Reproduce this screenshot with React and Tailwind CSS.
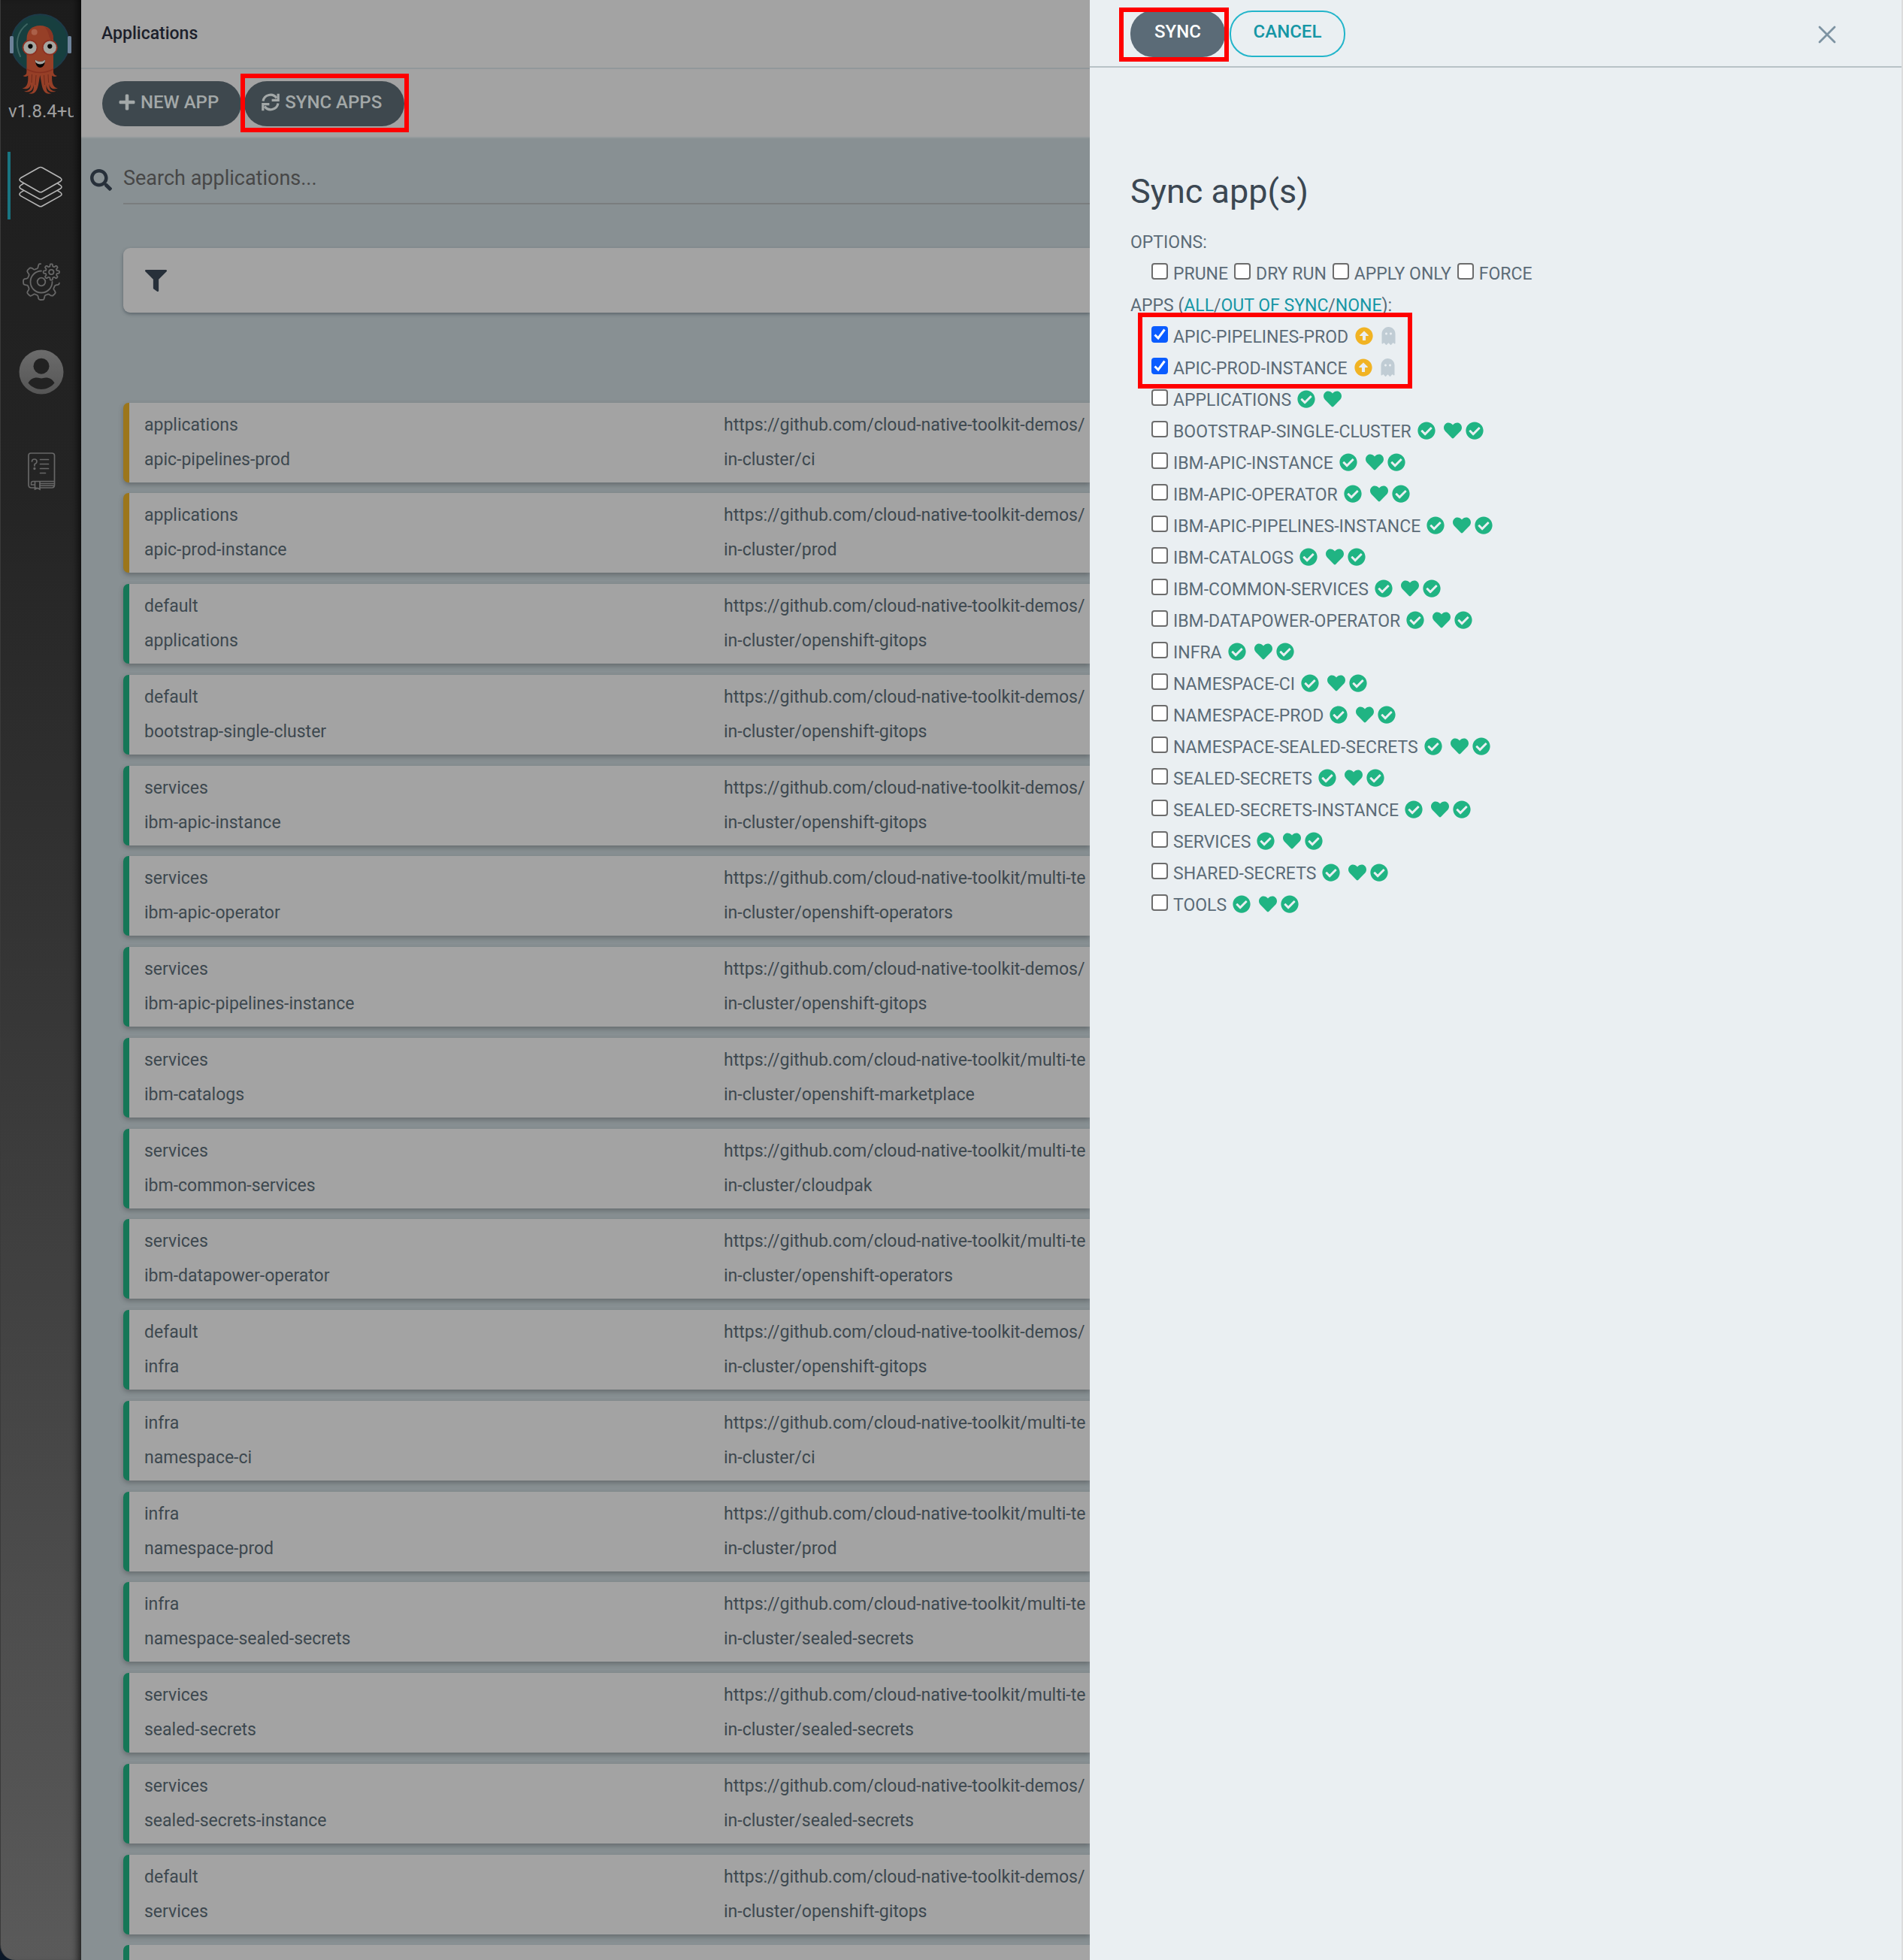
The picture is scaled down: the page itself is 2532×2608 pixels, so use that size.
import React from "react";
import { FaArrowAltCircleUp, FaCheckCircle, FaFilter, FaGhost, FaHeart, FaPlus, FaSearch } from "react-icons/fa";

const DEMOS = "https://github.com/cloud-native-toolkit-demos/";
const TOOLKIT = "https://github.com/cloud-native-toolkit/multi-te";

const rows = [
  { project: "applications", name: "apic-pipelines-prod", repo: DEMOS, dest: "in-cluster/ci", outOfSync: true },
  { project: "applications", name: "apic-prod-instance", repo: DEMOS, dest: "in-cluster/prod", outOfSync: true },
  { project: "default", name: "applications", repo: DEMOS, dest: "in-cluster/openshift-gitops" },
  { project: "default", name: "bootstrap-single-cluster", repo: DEMOS, dest: "in-cluster/openshift-gitops" },
  { project: "services", name: "ibm-apic-instance", repo: DEMOS, dest: "in-cluster/openshift-gitops" },
  { project: "services", name: "ibm-apic-operator", repo: TOOLKIT, dest: "in-cluster/openshift-operators" },
  { project: "services", name: "ibm-apic-pipelines-instance", repo: DEMOS, dest: "in-cluster/openshift-gitops" },
  { project: "services", name: "ibm-catalogs", repo: TOOLKIT, dest: "in-cluster/openshift-marketplace" },
  { project: "services", name: "ibm-common-services", repo: TOOLKIT, dest: "in-cluster/cloudpak" },
  { project: "services", name: "ibm-datapower-operator", repo: TOOLKIT, dest: "in-cluster/openshift-operators" },
  { project: "default", name: "infra", repo: DEMOS, dest: "in-cluster/openshift-gitops" },
  { project: "infra", name: "namespace-ci", repo: TOOLKIT, dest: "in-cluster/ci" },
  { project: "infra", name: "namespace-prod", repo: TOOLKIT, dest: "in-cluster/prod" },
  { project: "infra", name: "namespace-sealed-secrets", repo: TOOLKIT, dest: "in-cluster/sealed-secrets" },
  { project: "services", name: "sealed-secrets", repo: TOOLKIT, dest: "in-cluster/sealed-secrets" },
  { project: "services", name: "sealed-secrets-instance", repo: DEMOS, dest: "in-cluster/sealed-secrets" },
  { project: "default", name: "services", repo: DEMOS, dest: "in-cluster/openshift-gitops" },
];

const pendingApps = ["APIC-PIPELINES-PROD", "APIC-PROD-INSTANCE"];

const syncedApps = [
  "APPLICATIONS",
  "BOOTSTRAP-SINGLE-CLUSTER",
  "IBM-APIC-INSTANCE",
  "IBM-APIC-OPERATOR",
  "IBM-APIC-PIPELINES-INSTANCE",
  "IBM-CATALOGS",
  "IBM-COMMON-SERVICES",
  "IBM-DATAPOWER-OPERATOR",
  "INFRA",
  "NAMESPACE-CI",
  "NAMESPACE-PROD",
  "NAMESPACE-SEALED-SECRETS",
  "SEALED-SECRETS",
  "SEALED-SECRETS-INSTANCE",
  "SERVICES",
  "SHARED-SECRETS",
  "TOOLS",
];

/* Outline of a toothed wheel, traced counter-clockwise between two angles. */
function gearPath(cx, cy, inner, outer, teeth, from, to) {
  const mid = (inner + outer) / 2;
  const amp = (outer - inner) / 2;
  const points = [];
  for (let deg = from; deg <= to; deg += 3) {
    const a = (deg * Math.PI) / 180;
    const r = mid + amp * Math.tanh(2.6 * Math.cos(teeth * a));
    points.push(`${(cx + r * Math.cos(a)).toFixed(1)} ${(cy - r * Math.sin(a)).toFixed(1)}`);
  }
  return "M" + points.join("L");
}

function Logo() {
  return (
    <svg viewBox="12 16 86 112" className="h-[112px] w-[86px]" aria-label="Argo" role="img">
      <circle cx="54.3" cy="57.5" r="38.2" fill="#173f3f" stroke="#1d3a48" strokeWidth="2" />
      <rect x="14" y="48" width="5" height="23" rx="1.5" fill="#6d8299" />
      <rect x="91" y="48" width="5" height="23" rx="1.5" fill="#6d8299" />
      <path d="M37 32C24 42 20 58 28 75" fill="none" stroke="#3e6562" strokeWidth="2" strokeLinecap="round" />
      <g fill="#963f27">
        <path d="M36.500 52C36.500 40 44 34 54.300 34C64.500 34 72 40 72 52V97H36.500Z" />
        <path d="M37 92C37 98 35.500 100 31.500 101C35 103 38 101.500 40 99L44 92Z" />
        <path d="M71.600 92C71.600 98 73 100 77 101C73.500 103 70.500 101.500 68.500 99L65 92Z" />
        <path d="M38 96C39 108 38.500 116 30.500 117.500C36 119.500 41 118 42 112C42 118 40 121 33 121.500C40 124 44.500 121 46 113C46 120 45 123.500 39 124C45 126 50.500 124 52.500 110L54.300 100L56 110C58 124 63.500 126 69.500 124C63.500 123.500 62.500 120 62.500 113C64 121 68.500 124 75.500 121.500C68.500 121 66.500 118 66.500 112C67.500 118 72.500 119.500 78 117.500C70 116 69.500 108 70.500 96Z" />
      </g>
      <path d="M43.500 99L43 110M49 100L48 113M59.500 100L60.500 113M65 99L65.600 110" stroke="#6f2a1b" strokeWidth="1" fill="none" />
      <path d="M60 36C67 41 65 52 70 53L72 52C72 44 68 37 60 36Z" fill="#8b3523" />
      <path d="M36.500 92Q54 101 72 92" fill="none" stroke="#86301f" strokeWidth="1.500" />
      <circle cx="46.700" cy="42.700" r="4" fill="#ab6049" />
      <circle cx="41" cy="63.200" r="10.400" fill="#8e2f21" />
      <circle cx="67.300" cy="63.200" r="10.400" fill="#8e2f21" />
      <circle cx="41" cy="63.200" r="8.600" fill="#a5a5a0" />
      <circle cx="67.300" cy="63.200" r="8.600" fill="#a5a5a0" />
      <circle cx="41.400" cy="61.600" r="3.100" fill="#050505" />
      <circle cx="67.300" cy="61.600" r="3.100" fill="#050505" />
      <path d="M47.700 79.500Q54.500 84.500 61.200 79.500Q60.500 90 54.400 90Q48.500 90 47.700 79.500Z" fill="#080505" />
      <path d="M47.700 79.500Q54.500 84.500 61.200 79.500L60.500 83Q54.500 88 48.300 83Z" fill="#a5a5a0" />
    </svg>
  );
}

function LayersIcon() {
  return (
    <svg viewBox="0 0 60 60" className="h-[60px] w-[60px]" fill="none" stroke="currentColor" strokeWidth="1.600" strokeLinejoin="round">
      <path d="M27.500 4.300Q30 2.800 32.500 4.300L56.500 17.800Q59.500 20 56.500 22.200L32.500 36Q30 37.500 27.500 36L3.500 22.200Q.5 20 3.500 17.800Z" />
      <path d="M7.500 25L3.500 27.600Q.5 29.800 3.500 32L27.500 45.300Q30 46.800 32.500 45.300L56.500 32Q59.500 29.800 56.500 27.600L52.500 25" />
      <path d="M7.500 34.600L3.500 37.200Q.5 39.400 3.500 41.600L27.500 55Q30 56.500 32.500 55L56.500 41.600Q59.500 39.400 56.500 37.200L52.500 34.600" />
    </svg>
  );
}

function GearsIcon() {
  return (
    <svg viewBox="0 0 60 60" className="h-[60px] w-[60px]" fill="none" stroke="currentColor" strokeWidth="1.800" strokeLinecap="round" strokeLinejoin="round">
      <path d={gearPath(30, 30, 18.5, 24, 8, 92, 358)} />
      <path d="M30 15.500A14.500 14.500 0 1 0 44.500 30" />
      <circle cx="30" cy="30" r="5.300" />
      <path d={gearPath(43.3, 17, 7.6, 10.6, 8, 0, 360)} />
      <circle cx="43.300" cy="17" r="3.200" />
    </svg>
  );
}

function UserIcon() {
  return (
    <svg viewBox="0 0 60 60" className="h-[60px] w-[60px]">
      <defs>
        <linearGradient id="avatar" x1="0" y1="0" x2="0" y2="1">
          <stop offset="0" stopColor="#6c6c6c" />
          <stop offset="1" stopColor="#555555" />
        </linearGradient>
      </defs>
      <circle cx="30" cy="30" r="29.500" fill="url(#avatar)" />
      <g fill="#222222">
        <circle cx="30" cy="22.200" r="10.500" />
        <path d="M12.500 44.500C15 40 19 37.500 24 37.500C27 37.500 28 38.500 30 38.500C32 38.500 33 37.500 36 37.500C41 37.500 45 40 47.500 44.500C43 50 37 53 30 53C23 53 17 50 12.500 44.500Z" />
      </g>
    </svg>
  );
}

function DocsIcon() {
  return (
    <svg viewBox="0 0 40 52" className="h-[52px] w-10" fill="none" stroke="currentColor" strokeWidth="1.700" strokeLinecap="round">
      <path d="M13 48H7Q3 48 3 44V5Q3 2 6 2H34Q37.500 2 37.500 5V44Q37.500 48 34 48H18" />
      <path d="M37 39.500H9Q6.500 39.500 6.500 42V44H11M18 42.500H36.500M18 45.300H36.500" strokeWidth="1.400" />
      <path d="M11.500 40V50L15 48.500L18 50V40" />
      <path d="M18.500 10.500H29.500M18.500 16.500H29.500M18.500 22.500H29.500M18.500 28.500H25.500" />
      <path d="M7.500 13Q7.500 10 10.800 10Q14 10 14 13Q14 15.300 11 16.800V19" />
      <circle cx="10.900" cy="22.500" r=".8" />
    </svg>
  );
}

function Highlight({ className }) {
  return <span aria-hidden="true" className={`pointer-events-none absolute border-[6px] border-[#ff0000] ${className}`} />;
}

function Sidebar() {
  return (
    <aside className="flex w-[108px] shrink-0 bg-[#0b1828]">
      <div className="flex w-full flex-col rounded-bl-[20px] border-l border-[#3a3a3a] bg-[linear-gradient(180deg,#1c1c1c_0%,#242424_25%,#373737_52%,#5a5a5a_100%)] pt-4 shadow-[inset_-10px_0_10px_-6px_rgba(0,0,0,0.65)]">
        <div className="pl-[10px]">
          <Logo />
        </div>
        <div className="mr-[10px] ml-[10px] h-10 overflow-hidden text-[24px] leading-10 whitespace-nowrap text-[#a0a0a0]">v1.8.4+u</div>
        <nav className="mt-[34px] flex flex-col text-[#676767]">
          <a href="#applications" aria-label="Applications" className="ml-[9px] flex h-[90px] items-center border-l-4 border-[#187481] pt-1 pl-[10px] text-[#b5b5b5]">
            <LayersIcon />
          </a>
          <a href="#settings" aria-label="Settings" className="mt-[38px] flex h-[90px] items-center justify-center">
            <GearsIcon />
          </a>
          <a href="#user" aria-label="User info" className="mt-[30px] flex h-[90px] items-center justify-center">
            <UserIcon />
          </a>
          <a href="#docs" aria-label="Documentation" className="mt-[42px] flex h-[90px] items-center justify-center">
            <DocsIcon />
          </a>
        </nav>
      </div>
    </aside>
  );
}

function AppRow({ row }) {
  return (
    <li
      className={`mb-[15px] grid h-[106px] shrink-0 grid-cols-[771px_1fr] rounded-l-[7px] border-l-8 bg-[#a3a3a3] pt-[7px] pl-5 leading-[46px] whitespace-nowrap shadow-[0_3px_6px_rgba(60,64,66,0.45)] nth-[4n+1]:mb-[14px] ${row.outOfSync ? "border-[#9c761b]" : "border-[#157757]"}`}
    >
      <div>
        <div>{row.project}</div>
        <div>{row.name}</div>
      </div>
      <div>
        <div>{row.repo}</div>
        <div>{row.dest}</div>
      </div>
    </li>
  );
}

function Applications() {
  return (
    <main className="flex min-w-0 flex-1 flex-col overflow-hidden bg-[#889093] text-[23px] text-[#3d484f]">
      <header className="flex h-[92px] shrink-0 items-center border-b-2 border-[#91989b] bg-[#a3a3a3] pl-[27px]">
        <h1 className="font-medium text-[#1c1f2b]">Applications</h1>
      </header>
      <div className="flex h-[92px] shrink-0 gap-1 border-b-2 border-[#949a9c] bg-[#a3a3a3] pt-4 pl-7 text-[24px] font-medium text-[#a3a8a8]">
        <button type="button" className="flex h-[60px] items-center gap-[7px] rounded-[30px] bg-[#3e484e] pr-[30px] pb-1 pl-[22px]">
          <FaPlus className="h-6 w-[22px]" />
          NEW APP
        </button>
        <div className="relative">
          <button type="button" className="flex h-[60px] items-center gap-[7px] rounded-[30px] bg-[#3e484e] pr-[30px] pb-1 pl-[23px]">
            <svg viewBox="0 0 24 24" className="h-6 w-6" fill="none" stroke="currentColor" strokeWidth="3.200">
              <path d="M2 10.500A10 10 0 0 1 20 6.500" />
              <path d="M22.200 .8V9.400H13.600" />
              <path d="M22 13.500A10 10 0 0 1 4 17.500" />
              <path d="M1.800 23.200V14.600H10.400" />
            </svg>
            SYNC APPS
          </button>
          <Highlight className="-top-[10px] -right-[6px] -left-[5px] h-[78px]" />
        </div>
      </div>
      <label className="mt-5 flex h-[68px] shrink-0 pl-3">
        <FaSearch className="mt-[21px] mr-[15px] h-[29px] w-[29px] shrink-0 text-[#27303a]" />
        <input
          type="text"
          aria-label="Search applications"
          placeholder="Search applications..."
          className="w-full border-b-2 border-[#7a7d7e] text-[27px] outline-none placeholder:text-[#474747]"
        />
      </label>
      <button type="button" aria-label="Filters" className="mt-[58px] ml-14 flex h-[86px] shrink-0 items-center rounded-l-[9px] bg-[#a3a3a3] pl-[29px] text-[#27303a] shadow-[0_2px_4px_rgba(60,72,80,0.6)]">
        <FaFilter className="h-[29px] w-[29px]" />
      </button>
      <ul className="mt-[120px] ml-14 flex flex-col">
        {rows.map((row) => (
          <AppRow key={row.name} row={row} />
        ))}
        <li aria-hidden="true" className="h-[106px] shrink-0 rounded-l-[7px] border-l-8 border-[#157757] bg-[#a3a3a3]" />
      </ul>
    </main>
  );
}

function CheckOption({ label, checked = false, children }) {
  return (
    <label className="flex h-[42px] items-center">
      <span className="mr-[7px] mb-2 grid">
        <input
          type="checkbox"
          defaultChecked={checked}
          className="peer col-start-1 row-start-1 h-[22px] w-[22px] appearance-none rounded-[4px] border-2 border-[#6c6c6c] bg-white checked:border-[#0a5cff] checked:bg-[#0a5cff]"
        />
        <svg viewBox="0 0 22 22" className="pointer-events-none invisible col-start-1 row-start-1 h-[22px] w-[22px] peer-checked:visible" fill="none" stroke="#fff" strokeWidth="3">
          <path d="M4.500 11.500L9 16L17.500 4.500" />
        </svg>
      </span>
      {label}
      {children}
    </label>
  );
}

function SyncPanel() {
  return (
    <section aria-label="Sync apps" className="flex w-[1082px] shrink-0 flex-col border-r-2 border-[#dcdcdc] bg-[#eaeff2] text-[23px] text-[#5b6b77]">
      <div className="flex h-[90px] shrink-0 items-center border-b-2 border-[#b8c2c6] pt-[2px] pr-[85px] pl-[54px] text-[24px] font-medium">
        <div className="relative mr-[6px]">
          <button type="button" className="h-[62px] w-[126px] rounded-[30px] bg-[#5b6b77] pb-[6px] text-white">
            SYNC
          </button>
          <Highlight className="-top-1 -right-[5px] -left-[15px] h-[72px]" />
        </div>
        <button type="button" className="h-[62px] w-[154px] rounded-[30px] border-2 border-[#22b5ca] pb-[6px] text-[#1596a5]">
          CANCEL
        </button>
        <button type="button" aria-label="Close" className="ml-auto pt-[2px]">
          <svg viewBox="0 0 28 28" className="h-7 w-7" fill="none" stroke="#7d93a2" strokeWidth="2.800" strokeLinecap="round">
            <path d="M4 4L24 24M24 4L4 24" />
          </svg>
        </button>
      </div>
      <form className="pt-[133px] pl-[54px]">
        <h2 className="mb-[15px] text-[45px] leading-[64px] text-[#3b4752]">Sync app(s)</h2>
        <p className="leading-[42px]">OPTIONS:</p>
        <div className="flex gap-2 pl-7">
          <CheckOption label="PRUNE" />
          <CheckOption label="DRY RUN" />
          <CheckOption label="APPLY ONLY" />
          <CheckOption label="FORCE" />
        </div>
        <p className="leading-[42px]">
          APPS (
          <a href="#all" className="text-[#1596a5]">ALL</a>/<a href="#out-of-sync" className="text-[#1596a5]">OUT OF SYNC</a>/<a href="#none" className="text-[#1596a5]">NONE</a>
          ):
        </p>
        <div className="flex flex-col pl-7">
          <div className="relative">
            {pendingApps.map((name) => (
              <CheckOption key={name} label={name} checked>
                <FaArrowAltCircleUp className="mb-1 ml-[9px] h-6 w-6 text-[#f1b323]" />
                <FaGhost className="mb-1 ml-[11px] h-6 w-[19px] text-[#c0ccd4]" />
              </CheckOption>
            ))}
            <Highlight className="-top-3 -left-[18px] h-[101px] w-[365px]" />
          </div>
          {syncedApps.map((name, index) => (
            <CheckOption key={name} label={name}>
              <FaCheckCircle className="mb-1 ml-2 h-6 w-6 text-[#20b483]" />
              <FaHeart className="mb-1 ml-[11px] h-6 w-6 text-[#20b483]" />
              {index > 0 && <FaCheckCircle className="mb-1 ml-[5px] h-6 w-6 text-[#20b483]" />}
            </CheckOption>
          ))}
        </div>
      </form>
    </section>
  );
}

export default function App() {
  return (
    <div className="flex h-screen overflow-hidden font-['Roboto',sans-serif]">
      <Sidebar />
      <Applications />
      <SyncPanel />
    </div>
  );
}
